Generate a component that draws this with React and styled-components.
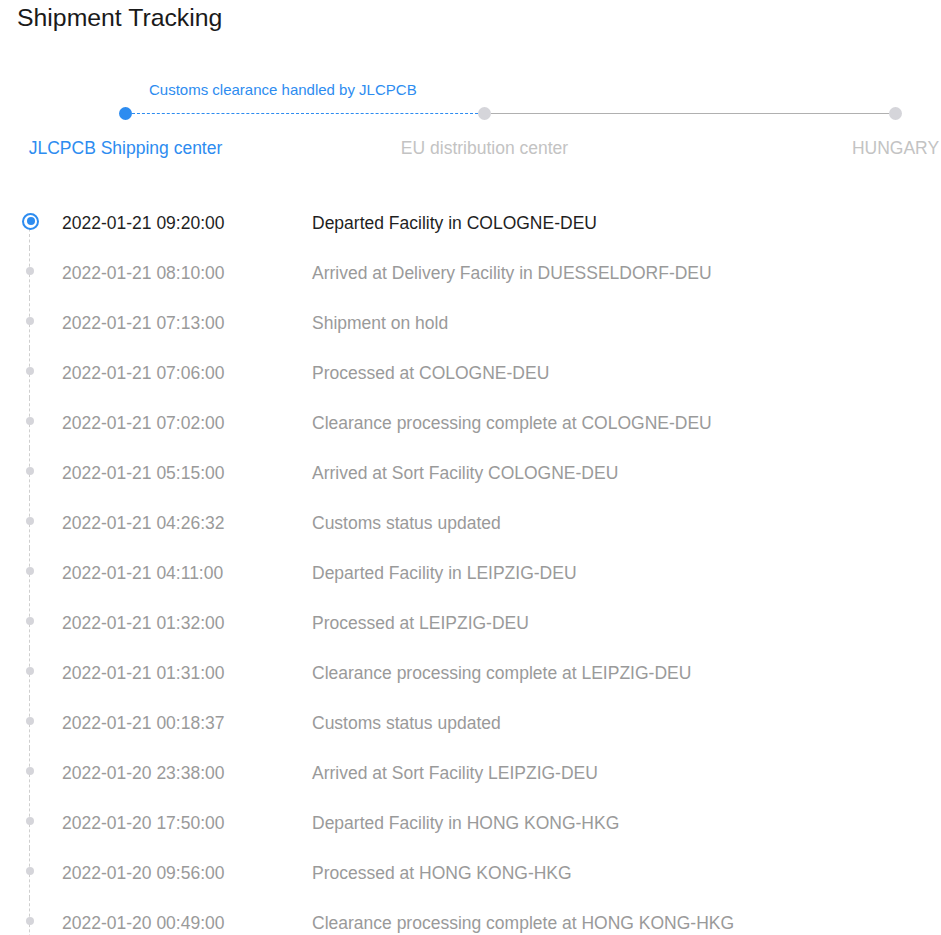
import React from 'react'
import styled, { createGlobalStyle } from 'styled-components'

const GlobalStyle = createGlobalStyle`
  html, body {
    margin: 0;
    padding: 0;
    background: #ffffff;
    overflow: hidden;
  }
  body {
    font-family: "Liberation Sans", Arial, sans-serif;
  }
`

const BLUE = '#2d8cf0'

const stages = [
  { name: 'JLCPCB Shipping center', done: true },
  { name: 'EU distribution center', done: false },
  { name: 'HUNGARY', done: false }
]

const events = [
  ['2022-01-21 09:20:00', 'Departed Facility in COLOGNE-DEU'],
  ['2022-01-21 08:10:00', 'Arrived at Delivery Facility in DUESSELDORF-DEU'],
  ['2022-01-21 07:13:00', 'Shipment on hold'],
  ['2022-01-21 07:06:00', 'Processed at COLOGNE-DEU'],
  ['2022-01-21 07:02:00', 'Clearance processing complete at COLOGNE-DEU'],
  ['2022-01-21 05:15:00', 'Arrived at Sort Facility COLOGNE-DEU'],
  ['2022-01-21 04:26:32', 'Customs status updated'],
  ['2022-01-21 04:11:00', 'Departed Facility in LEIPZIG-DEU'],
  ['2022-01-21 01:32:00', 'Processed at LEIPZIG-DEU'],
  ['2022-01-21 01:31:00', 'Clearance processing complete at LEIPZIG-DEU'],
  ['2022-01-21 00:18:37', 'Customs status updated'],
  ['2022-01-20 23:38:00', 'Arrived at Sort Facility LEIPZIG-DEU'],
  ['2022-01-20 17:50:00', 'Departed Facility in HONG KONG-HKG'],
  ['2022-01-20 09:56:00', 'Processed at HONG KONG-HKG'],
  ['2022-01-20 00:49:00', 'Clearance processing complete at HONG KONG-HKG']
]

function App () {
  return <Page>
    <GlobalStyle />
    <Title>Shipment Tracking</Title>

    <Stepper>
      <Caption>Customs clearance handled by JLCPCB</Caption>
      <StepDot active={stages[0].done} />
      <Segment dashed />
      <StepDot active={stages[1].done} />
      <Segment />
      <StepDot active={stages[2].done} />
      {stages.map((s, i) => (
        <StepLabel key={i} col={i * 2 + 1}>
          <span className={s.done ? 'done' : ''}>{s.name}</span>
        </StepLabel>
      ))}
    </Stepper>

    <Timeline>
      {events.map(([time, text], i) => (
        <EventRow key={i}>
          <Rail first={i === 0}>
            {i === 0 ? <RingDot /> : <SmallDot />}
          </Rail>
          <Time current={i === 0}>{time}</Time>
          <Desc current={i === 0}>{text}</Desc>
        </EventRow>
      ))}
    </Timeline>
  </Page>
}

export default App

const Page = styled.div`
  width: 941px;
  height: 935px;
  overflow: hidden;
  position: relative;
`

const Title = styled.h1`
  margin: 0;
  padding: 3px 0 0 17px;
  font-size: 24.8px;
  line-height: 30px;
  font-weight: normal;
  color: #1a1a1a;
`

const Stepper = styled.div`
  display: grid;
  grid-template-columns: 13px 346px 13px 398px 13px;
  grid-template-rows: 26px 13px auto;
  align-items: center;
  margin: 48px 0 0 119px;
`

const Caption = styled.div`
  grid-column: 2;
  grid-row: 1;
  align-self: start;
  padding-left: 17px;
  font-size: 15px;
  line-height: 18px;
  color: ${BLUE};
  white-space: nowrap;
`

const StepDot = styled.div`
  grid-row: 2;
  width: 13px;
  height: 13px;
  border-radius: 50%;
  background: ${({ active }) => active ? BLUE : '#d5d5da'};
`

const Segment = styled.div`
  grid-row: 2;
  height: 0;
  border-top: 1px ${({ dashed }) => dashed ? 'dashed' : 'solid'} ${({ dashed }) => dashed ? BLUE : '#b0b0b0'};
`

const StepLabel = styled.div`
  grid-row: 3;
  grid-column: ${({ col }) => col};
  display: flex;
  justify-content: center;
  padding-top: 18px;
  font-size: 17.5px;
  line-height: 20px;
  white-space: nowrap;
  color: #c3c3c3;
  .done{
    color: ${BLUE};
  }
`

const Timeline = styled.div`
  margin-top: 40px;
`

const EventRow = styled.div`
  display: grid;
  grid-template-columns: 62px 250px 1fr;
  align-items: center;
  height: 50px;
`

const Rail = styled.div`
  position: relative;
  height: 100%;
  display: flex;
  align-items: center;
  &::before{
    content: '';
    position: absolute;
    left: 29px;
    top: ${({ first }) => first ? '50%' : '0'};
    bottom: 0;
    border-left: 1px dashed #cfcfcf;
  }
`

const RingDot = styled.div`
  position: relative;
  margin: -4px 0 0 22px;
  width: 13px;
  height: 13px;
  border: 2px solid ${BLUE};
  border-radius: 50%;
  background: #ffffff;
  &::after{
    content: '';
    position: absolute;
    left: 2.5px;
    top: 2.5px;
    width: 8px;
    height: 8px;
    border-radius: 50%;
    background: ${BLUE};
  }
`

const SmallDot = styled.div`
  position: relative;
  margin: -4px 0 0 26px;
  width: 8px;
  height: 8px;
  border-radius: 50%;
  background: #d5d5da;
`

const Time = styled.div`
  font-size: 17.5px;
  color: ${({ current }) => current ? '#1f1f1f' : '#9a9a9a'};
  white-space: nowrap;
`

const Desc = styled.div`
  font-size: 17.5px;
  color: ${({ current }) => current ? '#1f1f1f' : '#9a9a9a'};
  white-space: nowrap;
`
